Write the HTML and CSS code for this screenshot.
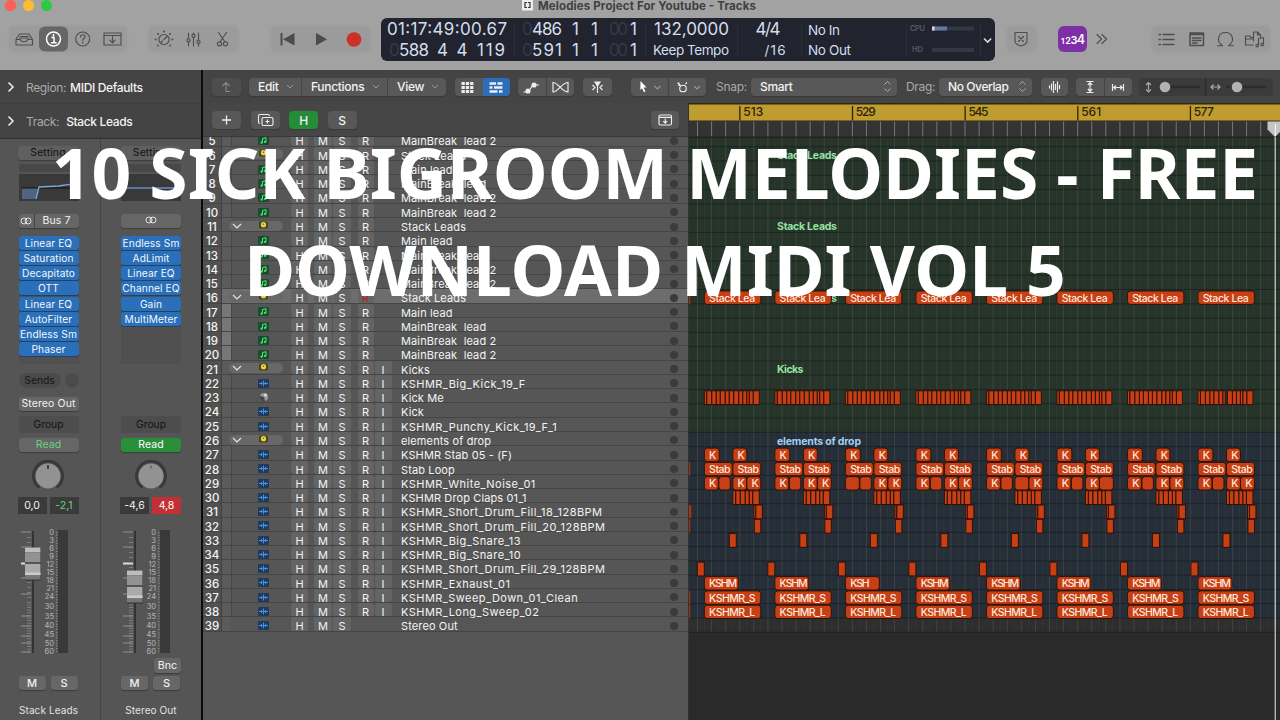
FILE: index.html
```html
<!DOCTYPE html>
<html lang="en">
<head>
<meta charset="utf-8">
<title>Melodies Project For Youtube - Tracks</title>
<link rel="stylesheet" href="styles.css">
</head>
<body>
<div class="app">
  <header class="toolbar">
    <div class="titlebar">
      <div class="lights"><i class="red"></i><i class="yellow"></i><i class="green"></i></div>
      <svg class="doc" width="11" height="12" viewBox="0 0 11 12"><path d="M0 0h11v10.500H0z" fill="#eee"/><path d="M5 2.500H3v5h2M6 2.500h2v5H6" fill="none" stroke="#333" stroke-width="1.200"/></svg>
      <span class="wintitle"><svg width="220" height="16"><text x="0" y="9.500" textLength="218" class="wt">Melodies Project For Youtube - Tracks</text></svg></span>
    </div>
    <div class="controls">
      <div class="group g1">
        <svg width="118" height="26" viewBox="9 26 118 26" class="ico">
          <rect x="39" y="26.500" width="29" height="25" rx="6" fill="#666" stroke="none"/>
          <path d="M16 39.500l3.500-5.500h9.500l3.500 5.500v5.500h-16.500zM16 39.500h4.500c.5 3 6.500 3 7 0h4.500M20.500 36.500h7.500M19.500 38h9.500"/>
          <g stroke="#fff" stroke-width="1.500"><circle cx="53.500" cy="39" r="7"/><path d="M52 37.500h2v5M51.500 42.800h4.500M53.500 34.500v1.600"/></g>
          <circle cx="82.700" cy="39" r="7"/><path d="M80.500 37c0-3 4.500-3 4.500-.2 0 1.700-2.200 1.800-2.200 3.500M82.800 42v1.200"/>
          <path d="M104 33h17v12h-17zM104 35.500h17M112.500 36.500v6M109.800 40.200l2.700 2.600 2.700-2.600"/>
        </svg>
      </div>
      <div class="group g2">
        <svg width="89" height="26" viewBox="149 26 89 26" class="ico">
          <circle cx="164" cy="39.500" r="5"/><path d="M164 39.500l3-3M161 42.500l1.500-1.500"/>
          <g fill="#4e4e4e" stroke="none"><circle cx="164" cy="31.500" r="1"/><circle cx="158" cy="34" r="1"/><circle cx="170" cy="34" r="1"/><circle cx="155.700" cy="39.500" r="1"/><circle cx="172.300" cy="39.500" r="1"/><circle cx="158" cy="45.500" r="1"/><circle cx="170" cy="45.500" r="1"/></g>
          <path d="M188.500 33v5.500M188.500 42v4M193.500 33v1M193.500 37.500v8.500M198.500 33v7M198.500 43.500v2.500"/><circle cx="188.500" cy="40.300" r="1.600"/><circle cx="193.500" cy="35.700" r="1.600"/><circle cx="198.500" cy="41.800" r="1.600"/>
          <path d="M218.500 32.500l6.500 9.500M226.500 32.500l-6.500 9.500"/><circle cx="219.500" cy="43.800" r="2.100"/><circle cx="225.500" cy="43.800" r="2.100"/>
        </svg>
      </div>
      <div class="group g3">
        <svg width="99" height="26" viewBox="271 26 99 26"><path d="M280.500 33h2v12.500h-2zM294.500 33v12.500l-11.500-6.250zM316 33l11 6.250-11 6.250z" fill="#4b4b4b"/><circle cx="354" cy="39.500" r="7.300" fill="#cc3128"/></svg>
      </div>
      <svg class="lcd" width="614" height="43" viewBox="381 18 614 43">
        <g stroke="#2b2e3a"><path d="M514.500 22v35M645.500 22v35M737.500 22v35M801.500 22v35M906.500 22v35M980.500 22v35"/></g>
        <g class="big">
          <text x="387" y="35.300" textLength="120">01:17:49:00.67</text>
          <text x="389" y="56" class="dim">0</text><text x="399" y="56" textLength="30">588</text><text x="437" y="56">4</text><text x="456.500" y="56">4</text><text x="477" y="56" textLength="28">119</text>
          <text x="522" y="35.300" class="dim">0</text><text x="532" y="35.300" textLength="30">486</text><text x="572" y="35.300">1</text><text x="591" y="35.300">1</text><text x="609" y="35.300" class="dim" textLength="19">00</text><text x="630" y="35.300">1</text>
          <text x="522" y="56" class="dim">0</text><text x="532" y="56" textLength="30">591</text><text x="572" y="56">1</text><text x="591" y="56">1</text><text x="609" y="56" class="dim" textLength="19">00</text><text x="630" y="56">1</text>
          <text x="654" y="35.300" textLength="75">132,0000</text><text x="755.500" y="35.300" textLength="25">4/4</text>
        </g>
        <g class="mid"><text x="653" y="55.300" textLength="76">Keep Tempo</text><text x="764.500" y="55.300" textLength="21">/16</text><text x="808" y="35" textLength="32">No In</text><text x="808" y="55.300" textLength="43">No Out</text></g>
        <g class="tiny"><text x="910" y="30.500" textLength="15">CPU</text><text x="912" y="52" textLength="11">HD</text></g>
        <rect x="932" y="26.500" width="42" height="4" fill="#343844"/><rect x="932" y="26.500" width="15" height="4" fill="#64799f"/><rect x="932" y="26.500" width="2.500" height="4" fill="#ccd8e8"/><rect x="932" y="48" width="42" height="4" fill="#343844"/>
        <path d="M984 38.500l3.600 3.600 3.600-3.600" fill="none" stroke="#ddd" stroke-width="1.500"/>
      </svg>
      <div class="group g4"><svg width="29" height="26" viewBox="1006.500 26 29 26" class="ico"><path d="M1014.500 32.500h12v9c0 2.500-6 4.500-6 4.500s-6-2-6-4.500zM1018 36.500l5 5M1023 36.500l-5 5"/></svg></div>
      <svg class="count" width="29" height="26" viewBox="0 0 29 26"><text y="17.500"><tspan x="3" font-size="8">1</tspan><tspan x="7.300" font-size="9">2</tspan><tspan x="12.500" font-size="11">3</tspan><tspan x="18.800" font-size="12.500">4</tspan></text></svg>
      <svg class="ico more" width="14" height="14"><path d="M2 2.500l4.500 4.500L2 11.500M7 2.500l4.500 4.500L7 11.500"/></svg>
      <div class="group g5">
        <svg width="118" height="26" viewBox="1152 26 118 26" class="ico">
          <path d="M1163 34.500h11M1163 39.500h11M1163 44.500h11M1159 34.500h1.500M1159 39.500h1.500M1159 44.500h1.500" stroke-width="1.400"/>
          <path d="M1190 33h13.500v12.500H1190zM1190 34.500h13.500M1192.500 38h8.500M1192.500 40.500h8.500M1192.500 43h4.500" stroke-width="1.500"/>
          <path d="M1217.500 45.700h5c-7-5-4-13.200 3-13.200s10 8.200 3 13.200h5"/>
          <path d="M1253 45h-7.500v-9h4l1.500 1.500h2.500M1246 39h7M1253.500 41v-9h4l3 3v2M1257.500 32v3h3M1258.500 45.500v-7l5-1v6.500"/><circle cx="1257.200" cy="45.500" r="1.300"/><circle cx="1262.200" cy="44.500" r="1.300"/>
        </svg>
      </div>
    </div>
  </header>

  <main class="work">
    <aside class="inspector">
      <div class="ihead"><svg width="8" height="12"><path d="M1.500 1.500l4.500 4.500-4.500 4.500" class="chev"/></svg><span class="lab">Region:</span><b>MIDI Defaults</b></div>
      <div class="ihead"><svg width="8" height="12"><path d="M1.500 1.500l4.500 4.500-4.500 4.500" class="chev"/></svg><span class="lab">Track:</span><b class="tk">Stack Leads</b></div>
      <div class="strips">
        <section class="strip">
          <div class="btn setting">Setting</div><div class="thin"></div>
          <svg class="eq" width="60" height="27"><path d="M3 14h16l-2 11H3z" fill="#4d657f"/><path d="M3 14h54" stroke="#111"/><path d="M17 25l3-12 20-1c6-1 10-2 18-2" fill="none" stroke="#7ba6d6" stroke-width="1.300"/></svg>
          <div class="btn bus"><span class="link"><svg width="12" height="8"><circle cx="4" cy="4" r="3"/><circle cx="8" cy="4" r="3"/></svg></span><span class="grow">Bus 7</span></div>
          <div class="plugins"><p>Linear EQ</p><p>Saturation</p><p>Decapitato</p><p>OTT</p><p>Linear EQ</p><p>AutoFilter</p><p>Endless Sm</p><p>Phaser</p></div>
          <div class="sends"><span>Sends</span><i></i></div>
          <div class="btn out">Stereo Out</div>
          <div class="grp">Group</div><div class="btn read">Read</div>
          <svg class="knob" width="34" height="34"><path d="M8.500 28.600A14.500 14.500 0 1 1 25.500 28.600" fill="none" stroke="#393939" stroke-width="3"/><circle cx="17" cy="17" r="12.500" fill="#929292"/><path d="M17 6v4" stroke="#222" stroke-width="1.500"/></svg>
          <div class="vals"><span>0,0</span><span class="grn">-2,1</span></div>
          <svg class="fader" width="64" height="126" data-cap="18.500"></svg>
          <div class="bnc"></div>
          <div class="ms"><span>M</span><span>S</span></div>
          <div class="sname">Stack Leads</div>
        </section>
        <section class="strip">
          <div class="btn setting">Setting</div><div class="thin"></div>
          <svg class="eq" width="60" height="27"><path d="M3 14h54" stroke="#5f8fc5" stroke-width="1.500"/></svg>
          <div class="btn bus"><span class="grow"><svg width="12" height="8"><circle cx="4" cy="4" r="3"/><circle cx="8" cy="4" r="3"/></svg></span></div>
          <div class="plugins"><p>Endless Sm</p><p>AdLimit</p><p>Linear EQ</p><p>Channel EQ</p><p>Gain</p><p>MultiMeter</p></div>
          <div class="sends none"></div>
          <div class="out none"></div>
          <div class="grp">Group</div><div class="btn read on">Read</div>
          <svg class="knob" width="34" height="34"><path d="M8.500 28.600A14.500 14.500 0 1 1 25.500 28.600" fill="none" stroke="#393939" stroke-width="3"/><circle cx="17" cy="17" r="12.500" fill="#929292"/><path d="M17 6.500v3" stroke="#666" stroke-width="1.500"/></svg>
          <div class="vals"><span>-4,6</span><span class="clip">4,8</span></div>
          <svg class="fader" width="64" height="126" data-cap="41.500"></svg>
          <div class="bnc"><span>Bnc</span></div>
          <div class="ms"><span>M</span><span>S</span></div>
          <div class="sname">Stereo Out</div>
        </section>
      </div>
    </aside>

    <section class="arrange">
      <div class="menubar">
        <div class="seg back"><svg width="29" height="18" class="mi"><path d="M14 13.500V5M10.500 8L14 4.500 17.500 8M14 13.500h4" stroke="#8a8a8a"/></svg></div>
        <div class="seg menus"><span class="m1">Edit<svg width="8" height="6"><path d="M1 1l3 3 3-3"/></svg></span><span class="m2">Functions<svg width="8" height="6"><path d="M1 1l3 3 3-3"/></svg></span><span class="m3">View<svg width="8" height="6"><path d="M1 1l3 3 3-3"/></svg></span></div>
        <div class="seg views"><svg width="55" height="18" viewBox="455 78 55 18" class="mi"><path d="M483 78h27v18h-27z" fill="#2c6db8" stroke="none"/><path d="M461.500 83.500h12M461.500 87.500h12M461.500 91.500h12" stroke-width="3" stroke-dasharray="3.300 1"/><path d="M489.500 83.500h6.500M497.500 83.500h5M489.500 87.500h3M494 87.500h8.500M489.500 91.500h8M499 91.500h3.500" stroke-width="2.700"/></svg></div>
        <div class="seg auto"><svg width="56" height="18" viewBox="518 78 56 18" class="mi"><path d="M523.500 92h4.500l5-7h6"/><g fill="#eee"><circle cx="528" cy="91" r="2"/><circle cx="534" cy="85" r="2"/></g><path d="M546.500 78v18" stroke="#444"/><path d="M553 82.500v9.500c5 0 9-9.500 15-9.500v9.500c-6 0-10-9.500-15-9.500z"/></svg></div>
        <div class="seg catch"><svg width="29" height="18" class="mi"><path d="M14.500 5v10M12 4.500h5M9.500 7l2.500 2.500L9.500 12M19.500 7L17 9.500l2.500 2.500"/><path d="M12 4h5l-2.500 4z" fill="#eee"/></svg></div>
        <div class="seg tools"><svg width="75" height="18" viewBox="631 78 75 18" class="mi"><path d="M640.500 81l6 6.500h-3l2 4-1.500.7-2-4-1.700 1.800z" fill="#fff" stroke="none"/><path d="M668.500 78v18" stroke="#444"/><path d="M654.500 86l3 3 3-3M694 86l3 3 3-3" stroke="#999"/><circle cx="683" cy="88.500" r="3.300"/><path d="M677.500 83l3 2.500M685.500 84l1.500-1.500M679 82.500v3.500"/></svg></div>
        <span class="lbl snap">Snap:</span>
        <div class="seg sel s1"><span>Smart</span><svg width="9" height="13" class="ud"><path d="M1.500 4.500l3-3 3 3M1.500 8.500l3 3 3-3"/></svg></div>
        <span class="lbl drag">Drag:</span>
        <div class="seg sel s2"><span>No Overlap</span><svg width="9" height="13" class="ud"><path d="M1.500 4.500l3-3 3 3M1.500 8.500l3 3 3-3"/></svg></div>
        <div class="seg wave"><svg width="27" height="18" class="mi"><path d="M8.500 7.500v3M10.500 5.500v7M12.500 3v12M14.500 6v6M16.500 3.500v11M18.500 7v4" /></svg></div>
        <div class="seg zoomfit"><svg width="56" height="18" class="mi"><path d="M10.500 3.500h7M10.500 14.500h7M14 5v8M11.800 7L14 4.500 16.200 7M11.800 11l2.200 2.500 2.200-2.500M36.500 6v7M47.500 6v7M38 9.500h8M40 7.500L37.700 9.500 40 11.500M44 7.500l2.300 2L44 11.500"/><path d="M28.500 0v18" stroke="#444"/></svg></div>
        <div class="seg sliders"><svg width="134" height="18" viewBox="1139 78 134 18" class="mi"><path d="M1160 87h40M1226 87h40" stroke="#2c2c2c" stroke-width="2.500"/><path d="M1205.500 78v18" stroke="#292929"/><path d="M1148.500 83.500v7M1146 85l2.500-2.500 2.500 2.500M1146 89.500l2.500 2.500 2.500-2.500M1211.500 87h8M1213.500 84.500L1211 87l2.500 2.500M1217.500 84.500L1220 87l-2.500 2.500" stroke="#aaa"/><g fill="#b2b2b2" stroke="none"><circle cx="1165" cy="87" r="5.300"/><circle cx="1237" cy="87" r="5.300"/></g></svg></div>
      </div>
      <div class="body">
        <div class="left">
          <div class="lhead">
            <div class="seg hb"><svg width="29" height="18" class="mi"><path d="M14.500 4.500v9M10 9h9" stroke-width="1.300"/></svg></div>
            <div class="seg hb"><svg width="29" height="18" class="mi"><rect x="11" y="6.500" width="11" height="8" rx="1.500"/><path d="M9 12.500c-1 0-1.500-.5-1.500-1.500V5c0-1 .5-1.500 1.500-1.500h8c1 0 1.500.5 1.500 1.500M16.500 8.500v4M14.500 10.500h4"/></svg></div>
            <div class="seg hb hon">H</div>
            <div class="seg hb hs">S</div>
            <div class="seg hb hc"><svg width="28" height="18" class="mi"><rect x="8" y="4" width="12.500" height="10" rx="1.500"/><path d="M8 6.300h12.500M14.200 7.500v4.500M12.200 10.200l2 2 2-2"/></svg></div>
          </div>
          <div class="tracks"><div class="rows" id="rows"></div></div>
        </div>
        <svg class="timeline" id="timeline" width="591" height="617" viewBox="689 103 591 617"></svg>
      </div>
    </section>
  </main>
  <h1 class="caption">10 SICK BIGROOM MELODIES - FREE<br>DOWNLOAD MIDI VOL 5</h1>
</div>
<script src="app.js"></script>
</body>
</html>
```
FILE: styles.css
```css
* { box-sizing: border-box; }
body { margin: 0; background: #2c2c2c; font-family: Inter, "Liberation Sans", sans-serif; font-size: 11px; color: #f2f2f2; }
p { margin: 0; }
.app { position: relative; width: 1280px; height: 720px; overflow: hidden; display: flex; flex-direction: column; }

/* Toolbar */
.toolbar { height: 70px; background: #a2a2a2; flex: none; display: flex; flex-direction: column; }
.titlebar { height: 18px; display: flex; align-items: flex-start; }
.lights { display: flex; gap: 7.500px; padding-left: 5px; width: 522px; }
.lights i { width: 10.500px; height: 10.500px; border-radius: 50%; }
.red { background: #fd5e57; }
.yellow { background: #fdbc30; }
.green { background: #2aca42; }
.wintitle { margin-left: 5px; }
.wt { font-size: 11.5px; font-weight: 700; fill: #404040; }
.controls { display: flex; height: 43px; align-items: center; }
.group { background: #9b9b9b; border-radius: 6px; height: 26px; flex: none; margin-top: -1px; box-shadow: 0 0 2px 1px #9e9e9e; }
.group svg, .lcd, .count, .more { display: block; flex: none; }
.g1 { margin-left: 9px; width: 118px; }
.g2 { margin-left: 22px; width: 89px; }
.g3 { margin-left: 33px; width: 99px; }
.ico { fill: none; stroke: #4e4e4e; stroke-width: 1.15; stroke-linejoin: round; stroke-linecap: round; }
.lcd { margin-left: 11px; background: #21232e; border-radius: 6px; }
.big text { font-size: 17px; fill: #d3deec; }
.big .dim { fill: #353945; }
.mid text { font-size: 13.5px; fill: #d3deec; }
.tiny text { font-size: 7.5px; fill: #555c6c; font-weight: 600; }
.g4 { margin-left: 11.500px; width: 29px; }
.count { margin-left: 22.500px; margin-top: -1px; background: #7e2fa6; border-radius: 6px; }
.count text { fill: #fff; font-weight: 600; }
.more { margin-left: 8px; margin-right: 0; margin-top: -1px; }
.g5 { margin-left: 43px; width: 118px; }

.work { display: flex; flex: 1; min-height: 0; }

/* Inspector */
.inspector { width: 203px; flex: none; background: #555; border-right: 2px solid #0b0b0b; display: flex; flex-direction: column; }
.ihead { height: 34px; background: #444; display: flex; align-items: center; padding: 1px 0 0 7px; font-size: 12px; letter-spacing: -.35px; border-bottom: 1px solid #3f3f3f; }
.ihead .lab { color: #aaa; margin-left: 11px; }
.ihead b { font-weight: 500; margin-left: 4px; color: #f2f2f2; }
.ihead .tk { margin-left: 7px; }
.chev { fill: none; stroke: #eee; stroke-width: 1.500; }
.strips { display: flex; flex: 1; border-top: 1px solid #333; }
.strip { width: 101px; padding: 7px 0 0 18.500px; display: flex; flex-direction: column; border-right: 1px solid #454545; flex: none; }
.strip + .strip { border-right: 0; padding-left: 20px; }
.btn { width: 60px; height: 14px; border-radius: 3px; background: #666; text-align: center; line-height: 14px; box-shadow: 0 1px 1px #3c3c3c; font-size: 10.500px; flex: none; letter-spacing: .1px; }
.setting { color: #111; background: #5f5f5f; margin-left: -0.500px; }
.thin { width: 60px; height: 8px; background: #484848; margin-top: 4px; flex: none; }
.eq { background: #393939; margin-top: 2px; flex: none; }
.bus { margin-top: 13px; display: flex; align-items: stretch; }
.bus svg { fill: none; stroke: #ddd; }
.link { width: 16px; border-right: 1px solid #444; display: flex; align-items: center; justify-content: center; }
.grow { flex: 1; display: block; }
.plugins { width: 60px; height: 128px; margin-top: 8px; display: flex; flex-direction: column; gap: 1.150px; flex: none; background: #505050; }
.plugins p { height: 14px; line-height: 14px; font-size: 10.200px; border-radius: 3px; background: #2a6fb9; color: #f3f6fa; text-align: center; white-space: nowrap; box-shadow: 0 1px 0 #26415e; letter-spacing: .1px; }
.sends { display: flex; gap: 4px; margin-top: 9px; height: 15px; width: 60px; flex: none; }
.sends span { width: 42px; border-radius: 8px; background: #4b4b4b; text-align: center; line-height: 15px; color: #151515; font-size: 10.300px; }
.sends i { width: 14px; border-radius: 50%; background: #4b4b4b; }
.out { margin-top: 9px; height: 14px; flex: none; }
.none { background: none; }
.grp { margin-top: 5px; height: 17px; width: 60px; background: #4d4d4d; color: #131313; text-align: center; line-height: 17px; font-size: 10.300px; flex: none; }
.read { margin-top: 5px; color: #6ed07c; }
.read.on { background: #2a8e3b; color: #fff; }
.knob { margin: 6.500px 0 0 12.500px; flex: none; }
.vals { display: flex; gap: 3px; margin: 4.500px 0 0 -1px; flex: none; }
.vals span { width: 29px; height: 17px; background: #3a3a3a; text-align: center; line-height: 17px; font-size: 10.500px; }
.vals .grn { color: #6ed07c; }
.vals .clip { background: #c22f35; color: #fff; }
.fader { margin-top: 15px; flex: none; overflow: visible; }
.fader text { font-size: 7.500px; fill: #b5b5b5; text-anchor: end; }
.bnc { height: 15px; margin-top: 3px; width: 60px; display: flex; justify-content: flex-end; flex: none; }
.bnc span { width: 27px; background: #666; border-radius: 3px; text-align: center; line-height: 15px; box-shadow: 0 1px 1px #3c3c3c; font-size: 10.700px; }
.ms { display: flex; gap: 5px; margin-top: 3px; flex: none; }
.ms span { width: 27px; height: 14px; line-height: 14px; background: #676767; border-radius: 3px; text-align: center; font-weight: 500; font-size: 11px; box-shadow: 0 1px 1px #3c3c3c; }
.sname { width: 80px; margin: 14px 0 0 -10px; text-align: center; font-size: 10px; color: #e2e2e2; letter-spacing: .1px; }

/* Arrange area */
.arrange { flex: 1; display: flex; flex-direction: column; min-width: 0; }
.menubar { height: 33px; background: #444; display: flex; align-items: center; flex: none; padding-left: 9px; }
.seg { height: 18px; background: #585858; border-radius: 4px; flex: none; display: flex; align-items: center; overflow: hidden; font-size: 12px; letter-spacing: -.3px; font-weight: 500; box-shadow: 0 1px 1px #393939; }
.mi { fill: none; stroke: #eee; stroke-width: 1.150; display: block; }
.back { width: 29px; background: #4d4d4d; }
.menus { width: 197px; margin-left: 8px; }
.menus span { height: 18px; display: flex; align-items: center; justify-content: space-between; padding: 0 7px 0 9px; border-right: 1px solid #444; }
.menus svg { fill: none; stroke: #999; }
.menus .m1 { width: 53px; }
.menus .m2 { width: 86px; }
.menus .m3 { width: 58px; border: 0; }
.views { width: 55px; margin-left: 9px; }
.auto { width: 56px; margin-left: 8px; }
.catch { width: 29px; margin-left: 9px; }
.tools { width: 75px; margin-left: 19px; }
.lbl { color: #a8a8a8; font-size: 12px; letter-spacing: -.3px; white-space: nowrap; flex: none; }
.snap { width: 35px; margin-left: 10px; }
.drag { width: 33px; margin-left: 9px; }
.sel { justify-content: space-between; padding: 0 5px 0 9px; }
.s1 { width: 146px; }
.s2 { width: 93px; }
.s2 span { letter-spacing: -.4px; }
.ud { fill: none; stroke: #aaa; }
.wave { width: 27px; margin-left: 9px; }
.zoomfit { width: 56px; margin-left: 8px; }
.sliders { width: 134px; margin-left: 7px; background: #3b3b3b; box-shadow: none; }
.body { display: flex; flex: 1; min-height: 0; }
.left { width: 486px; display: flex; flex-direction: column; flex: none; border-right: 1px solid #333; }
.timeline { display: block; flex: none; }
.lhead { height: 34px; background: #464646; display: flex; align-items: center; padding: 1px 0 0 9px; gap: 9.500px; border-bottom: 1px solid #383838; flex: none; }
.hb { width: 29px; justify-content: center; }
.hon { background: #268c38; }
.hc { margin-left: auto; margin-right: 9px; width: 28px; }
.tracks { flex: 1; background: #565656; overflow: hidden; }
.rows { margin-top: -4.600px; }
.row { display: flex; height: 14.280px; align-items: stretch; border-bottom: 1px solid #454545; line-height: 18px; font-size: 11px; color: #f3f3f3; }
.num { width: 19px; text-align: center; font-weight: 500; font-size: 11.500px; background: #515151; border-right: 1px solid #404040; flex: none; }
.gut { width: 9px; flex: none; background: #5b5b5b; }
.gut.lit { background: #777; }
.stack { width: 60px; flex: none; border-left: 1px solid #474747; }
.stack svg { display: block; margin-top: .8px; }
.row.head .stack, .row.last .stack { border-left-color: transparent; }
.row.current .cells, .row.current .stack, .row.current .gut { background: #6d6d6d; }
.cells { flex: 1; display: flex; }
.cells i { font-style: normal; text-align: center; background: #646464; border-radius: 2px; flex: none; }
.cells .h { width: 17px; }
.cells .m { width: 18px; margin-left: 6px; }
.cells .s { width: 18px; margin-left: 1px; }
.cells .r { width: 16px; margin-left: 6.500px; }
.cells .i { width: 17px; margin-left: 1px; }
.cells .off { visibility: hidden; }
.cells .armed { color: #b8201c; }
.nm { margin-left: 9.500px; flex: 1; white-space: pre; letter-spacing: .12px; }
.nm.wide { letter-spacing: .46px; }
.dot { width: 8px; height: 8px; border-radius: 50%; background: #3b3b3b; margin: 4.500px 10.500px 0 0; flex: none; }

.timeline text { font-size: 10.500px; font-weight: 500; fill: #ffe9df; }
.timeline .rul { fill: #2d2408; font-size: 12px; font-weight: 500; }
.timeline .fg { fill: #95e3a2; font-weight: 700; font-size: 10.500px; }
.timeline .fb { fill: #a3cdf3; font-weight: 700; font-size: 10.500px; }

.caption { position: absolute; left: 15px; top: 123.500px; width: 1280px; margin: 0; text-align: center; white-space: nowrap; font-family: "Noto Sans", sans-serif; font-weight: 700; font-size: 69.500px; line-height: 97px; color: #fff; }
```
FILE: app.js
```js
const ROW = 14.28;
const topOf = n => 432.3 + ROW * (n - 26);

/* Track list */
const names = ['MainBreak  lead 2', 'Stack Leads', 'Main lead', 'MainBreak  lead', 'MainBreak  lead 2', 'MainBreak  lead 2',
  'Stack Leads', 'Main lead', 'MainBreak  lead', 'MainBreak  lead 2', 'MainBreak  lead 2',
  'Stack Leads', 'Main lead', 'MainBreak  lead', 'MainBreak  lead 2', 'MainBreak  lead 2',
  'Kicks', 'KSHMR_Big_Kick_19_F', 'Kick Me', 'Kick', 'KSHMR_Punchy_Kick_19_F_1', 'elements of drop',
  'KSHMR Stab 05 - (F)', 'Stab Loop', 'KSHMR_White_Noise_01', 'KSHMR Drop Claps 01_1', 'KSHMR_Short_Drum_Fill_18_128BPM',
  'KSHMR_Short_Drum_Fill_20_128BPM', 'KSHMR_Big_Snare_13', 'KSHMR_Big_Snare_10', 'KSHMR_Short_Drum_Fill_29_128BPM',
  'KSHMR_Exhaust_01', 'KSHMR_Sweep_Down_01_Clean', 'KSHMR_Long_Sweep_02', 'Stereo Out'];
const heads = [6, 11, 16, 21, 26];
const note = '<rect x="26" y="3" width="11" height="9" rx="1" fill="#14512a"/><path d="M30.500 9.500v-4l3.500-.8v4" stroke="#5fe07f" fill="none"/><circle cx="29.600" cy="9.700" r="1.100" fill="#5fe07f"/><circle cx="33.100" cy="8.900" r="1.100" fill="#5fe07f"/>';
const audio = '<rect x="26" y="3" width="11" height="9" rx="1" fill="#1f3a5c"/><path d="M27 7.500h9M29.500 6v3M31.500 4.500v6M33.500 6v3" stroke="#4590d8"/>';
const pad = '<circle cx="32" cy="7" r="4" fill="#999"/><path d="M28 6a4 4 0 0 0 5 5l-1-4z" fill="#444"/><circle cx="33.500" cy="5" r="1.500" fill="#ddd"/>';
const folder = '<rect x="-3" y="2" width="54" height="10" rx="5" fill="#686868"/><path d="M1 5l4 4 4-4" stroke="#e5e5e5" stroke-width="1.200" fill="none"/><rect x="27" y="2.500" width="9" height="7" rx="1" fill="#4a4714"/><circle cx="31.500" cy="5.700" r="2.600" fill="#e8d948"/><circle cx="31.500" cy="5.300" r=".8" fill="#6b6210"/>';
document.getElementById('rows').innerHTML = names.map((name, k) => {
  const n = k + 5, head = heads.includes(n);
  const icon = head ? folder : n < 21 ? note : n === 23 ? pad : audio;
  const cls = 'row' + (head ? ' head' : '') + (n === 16 ? ' current' : '') + (n === 39 ? ' last' : '');
  return `<div class="${cls}"><span class="num">${n}</span><span class="gut${n > 16 && n < 21 ? ' lit' : ''}"></span>` +
    `<span class="stack"><svg width="59" height="13" overflow="visible">${icon}</svg></span><div class="cells"><i class="h">H</i><i class="m">M</i><i class="s">S</i>` +
    `<i class="r${n === 39 ? ' off' : ''}${n === 16 ? ' armed' : ''}">R</i><i class="i${n < 21 || n === 39 ? ' off' : ''}">I</i>` +
    `<span class="nm${name.startsWith('KSHMR_') ? ' wide' : ''}">${name}</span><span class="dot"></span></div></div>`;
}).join('');

/* Faders */
const scale = [[0, 5], [3, 13], [6, 21], [9, 29], [12, 37], [15, 45], [18, 53], [21, 61], [24, 69.5], [30, 79.5], [35, 89], [40, 98], [45, 107], [50, 116], [60, 124.500]];
document.querySelectorAll('.fader').forEach(f => {
  let s = '';
  [[3, 1], [18, 1], [34, 2], [49, 1], [65, 1], [87, 1], [97, 1], [107, 1], [114, 1], [123, 1]].forEach(([y, w]) => { s += `<rect x="2" y="${y - .5}" width="10" height="${w}" fill="${w > 1 ? '#ddd' : '#929292'}"/>`; });
  for (let y = 8; y < 123; y += y < 70 ? 5 : 2.6) s += `<rect x="8" y="${y}" width="4" height=".8" fill="#868686"/>`;
  s += '<rect x="13" y="2" width="2" height="122" fill="#333"/><rect x="39" y="1" width="10" height="123" fill="#393939"/>';
  for (let y = 3; y < 124; y += 2.700) s += `<rect x="37" y="${y}" width="1.500" height=".8" fill="#999"/>`;
  scale.forEach(([t, y]) => { s += `<text x="35" y="${y + .5}">${t}</text>`; });
  const c = +f.dataset.cap;
  s += `<rect x="6" y="${c}" width="16" height="33" fill="#333"/><rect x="6" y="${c}" width="15.500" height="5" fill="#bdbdbd"/><rect x="6" y="${c + 5}" width="15.500" height="10" fill="#929292"/><rect x="6" y="${c + 15}" width="15.500" height="1.300" fill="#444"/><rect x="6" y="${c + 16.300}" width="15.500" height="11" fill="#aaa"/><rect x="6" y="${c + 25}" width="15.500" height="3" fill="#ccc"/><rect x="6" y="${c + 28}" width="15.500" height="4" fill="#777"/>`;
  f.innerHTML = s;
});

/* Timeline */
let t = '';
const rect = (x, y, w, h, f, extra = '') => { t += `<rect x="${x}" y="${y}" width="${w}" height="${h}" fill="${f}" ${extra}/>`; };
rect(689, 103, 591, 617, '#2a2a2a');
rect(689, 137, 591, 295.3, '#26342a');
rect(689, 432.3, 591, 186, '#262e37');
rect(689, 618.3, 591, 14.3, '#2e2e2e');
for (let x = 697.5; x < 1280; x += 7.04) rect(x - .5, 137, 1, 495.6, '#fff', 'opacity=".03"');
for (let x = 697.5; x < 1280; x += 14.08) rect(x - .5, 137, 1, 495.6, '#fff', 'opacity=".08"');
for (let n = 6; n < 41; n++) rect(689, topOf(n) - .5, 591, 1, '#000', 'opacity=".3"');
rect(689, 121, 591, 16, '#333');
for (let x = 697.5; x < 1280; x += 14.08) rect(x - .5, 121.5, 1, 15, '#777');
rect(689, 136.5, 591, 1.5, '#222');
rect(689, 103, 591, 18, '#2f2814');
rect(689, 104.5, 591, 16, '#bf9c2f');
[513, 529, 545, 561, 577].forEach((b, i) => {
  const x = 739.7 + i * 112.65;
  rect(x - .5, 106, 1.3, 14.500, '#2d2408');
  t += `<text class="rul" x="${x + 3.500}" y="115.600" textLength="20">${b}</text>`;
});
[6, 11, 16, 21].forEach(n => { t += `<text class="fg" x="777" y="${topOf(n) + 12.2}" textLength="${n === 21 ? 26.500 : 60}">${n === 21 ? 'Kicks' : 'Stack Leads'}</text>`; });
t += `<text class="fb" x="777" y="${topOf(26) + 12.2}" textLength="84">elements of drop</text>`;

const ORANGE = '#c73f14';
const clip = (x, n, w, label, len) => {
  rect(x, topOf(n) + 1.5, w, 13.4, ORANGE, 'rx="3" stroke="#2b120a" stroke-width="1"');
  if (label) t += `<text x="${x + 4.800}" y="${topOf(n) + 12.200}" textLength="${len}">${label}</text>`;
};
const block = (x, n, w) => rect(x, topOf(n) + 1.3, w, 13.8, ORANGE, 'stroke="#2b120a" stroke-width="1"');
const noise = ['K.KK', 'K.KK', '..KK', 'K.KK', 'K..K', 'K.K.', 'K.KK', 'K.KK'];
for (let i = 0; i < 8; i++) {
  const x = 704.300 + i * 70.52;
  clip(x, 16, 56.500, 'Stack Lea', 46);
  [[0, 2.500], [2.500, 5], [7.500, 4.500], [12, 4], [16, 5], [21, 4], [25, 4.500], [29.500, 5], [34.500, 4], [38.500, 4], [42.500, 2.500], [45, 4], [49, 6]].forEach(([d, w]) => {
    if (i === 7 && d === 25) block(x + d, 23, 2.3); else block(x + d, 23, w);
  });
  clip(x, 27, 15, 'K', 6.300); clip(x + 28.500, 27, 14, 'K', 6.300);
  clip(x, 28, 28, 'Stab', 21.500); clip(x + 28.500, 28, 28, 'Stab', 21.500);
  [[0, 14], [14.500, 11.500], [28.500, 14], [42.500, 14]].forEach(([d, w], j) => clip(x + d, 29, w, noise[i][j] === 'K' ? 'K' : '', 6.300));
  [[28.500, 3], [31.500, 4.500], [36, 5], [41, 4], [45, 3.500], [48.500, 6.500]].forEach(([d, w]) => block(x + d, 30, w));
  block(x + 49.500, 31, 2); block(x + 51.500, 31, 6.500); block(x + 50, 32, 6.500);
  block(x + 25, 33, 7); block(x - 7, 35, 7);
  clip(x, 36, 34, i === 2 ? 'KSH' : 'KSHM', i === 2 ? 19.500 : 28);
  clip(x, 37, 56.500, 'KSHMR_S', 46.500); clip(x, 38, 56.500, 'KSHMR_L', 46);
}
[16, 28, 31, 32, 37, 38].forEach(n => rect(689, topOf(n) + 1.5, n === 31 ? 2.300 : 1.200, 13, '#a8350f'));
rect(1274.6, 137, 1.4, 583, '#b5b5b5');
t += '<path d="M1267.500 121.500h15v8l-7.500 7.500-7.500-7.500z" fill="#c4c4c4"/><path d="M1275.300 124v12" stroke="#fff"/>';
document.getElementById('timeline').innerHTML = t;
```
